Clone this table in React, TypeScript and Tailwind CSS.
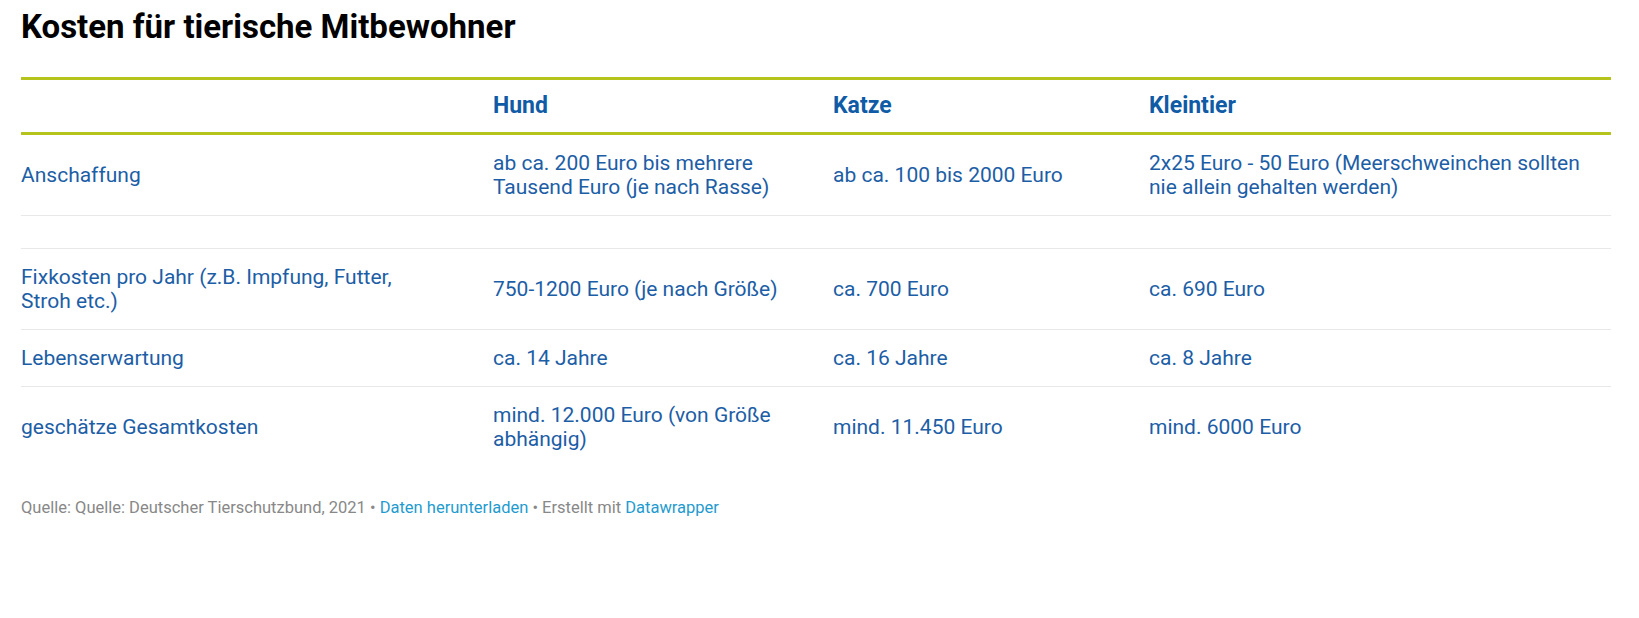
import React from "react";

const rows: { label: React.ReactNode; hund: React.ReactNode; katze: React.ReactNode; klein: React.ReactNode }[] = [
  {
    label: "Anschaffung",
    hund: (
      <>
        ab ca. 200 Euro bis mehrere
        <br />
        Tausend Euro (je nach Rasse)
      </>
    ),
    katze: "ab ca. 100 bis 2000 Euro",
    klein: (
      <>
        2x25 Euro - 50 Euro (Meerschweinchen sollten
        <br />
        nie allein gehalten werden)
      </>
    ),
  },
  { label: "", hund: "", katze: "", klein: "" },
  {
    label: (
      <>
        Fixkosten pro Jahr (z.B. Impfung, Futter,
        <br />
        Stroh etc.)
      </>
    ),
    hund: "750-1200 Euro (je nach Größe)",
    katze: "ca. 700 Euro",
    klein: "ca. 690 Euro",
  },
  {
    label: "Lebenserwartung",
    hund: "ca. 14 Jahre",
    katze: "ca. 16 Jahre",
    klein: "ca. 8 Jahre",
  },
  {
    label: "geschätze Gesamtkosten",
    hund: (
      <>
        mind. 12.000 Euro (von Größe
        <br />
        abhängig)
      </>
    ),
    katze: "mind. 11.450 Euro",
    klein: "mind. 6000 Euro",
  },
];

export default function App() {
  return (
    <div className="min-h-screen bg-white pl-[21px] font-['Roboto',sans-serif]">
      <h1 className="pt-[7px] text-[33px] leading-[40px] font-bold text-black">
        Kosten für tierische Mitbewohner
      </h1>

      <div className="mt-[30px] w-[1590px]">
        <div className="grid grid-cols-[472px_340px_316px_1fr] border-y-[3px] border-[#b4c41d] py-[14px] text-[23px] leading-6 font-bold text-[#0f5ba6]">
          <div></div>
          <div>Hund</div>
          <div>Katze</div>
          <div>Kleintier</div>
        </div>

        {rows.map((r, i) => {
          const empty = r.label === "";
          return (
            <div
              key={i}
              className={`grid grid-cols-[472px_340px_316px_1fr] items-center text-[21px] leading-6 text-[#1c5ea6] ${
                i < rows.length - 1 ? "border-b border-[#e8e8e8]" : ""
              } ${empty ? "h-[33px]" : "py-4"}`}
            >
              <div>{r.label}</div>
              <div>{r.hund}</div>
              <div>{r.katze}</div>
              <div>{r.klein}</div>
            </div>
          );
        })}
      </div>

      <p className="mt-[31px] text-[16.5px] leading-5 text-[#888888]">
        Quelle: Quelle: Deutscher Tierschutzbund, 2021 •{" "}
        <a className="text-[#1f9bcf]">Daten herunterladen</a> • Erstellt mit{" "}
        <a className="text-[#1f9bcf]">Datawrapper</a>
      </p>
    </div>
  );
}
